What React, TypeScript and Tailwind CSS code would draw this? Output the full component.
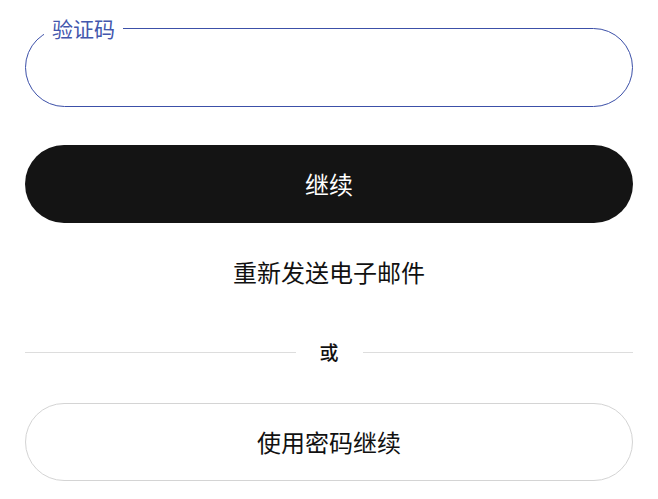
import React from 'react';

const font = { fontFamily: '"Noto Sans CJK SC", "Noto Sans", sans-serif' };

const App: React.FC = () => {
  return (
    <div className="bg-white w-[658px] h-[499px] px-[25px] pt-[18px] flex flex-col" style={font}>
      <fieldset className="h-[89px] border-[1.5px] border-[#3c50a8] rounded-full px-[18px] m-0">
        <legend className="px-2 text-[21px] leading-[20px] text-[#4357ad]">验证码</legend>
        <input className="w-full h-full outline-none bg-transparent text-[20px]" />
      </fieldset>

      <button className="mt-[38px] h-[78px] rounded-full bg-[#141414] text-white text-[24px] flex items-center justify-center">
        继续
      </button>

      <div className="mt-[34px] h-[30px] flex items-center justify-center text-[24px] text-[#111]">
        重新发送电子邮件
      </div>

      <div className="mt-[53px] h-[24px] flex items-center gap-6">
        <div className="flex-1 h-px bg-[#dddddd]" />
        <span className="text-[19px] font-medium text-[#111]">或</span>
        <div className="flex-1 h-px bg-[#dddddd]" />
      </div>

      <button className="mt-[39px] h-[78px] rounded-full border-[1.5px] border-[#d4d4d4] bg-white text-[24px] text-[#111] flex items-center justify-center">
        使用密码继续
      </button>
    </div>
  );
};

export default App;
